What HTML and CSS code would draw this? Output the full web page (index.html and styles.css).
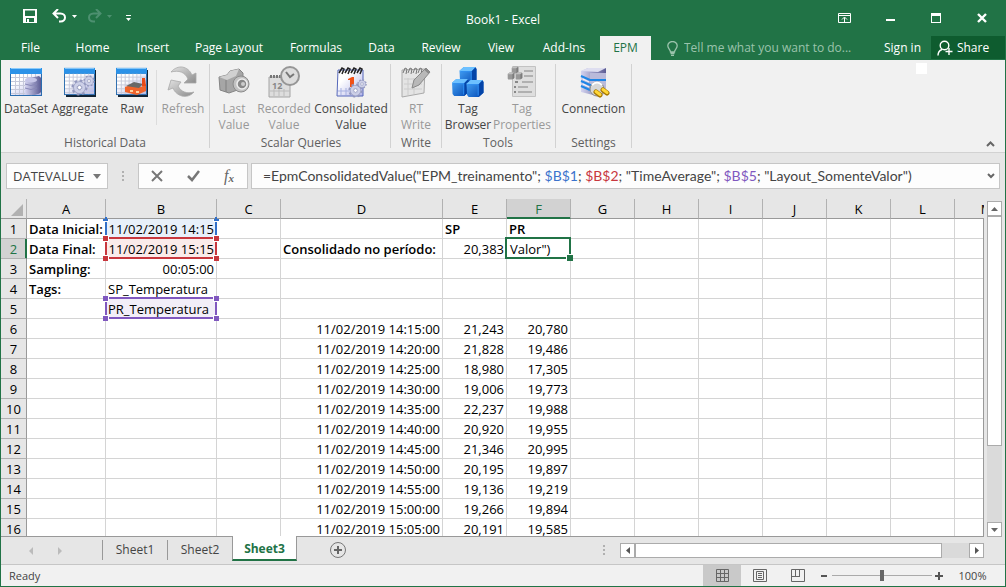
FILE: index.html
```
<!DOCTYPE html>
<html lang="en">
<head>
<meta charset="utf-8">
<title>Book1 - Excel</title>
<link rel="stylesheet" href="styles.css">
</head>
<body>
<svg class="defs" aria-hidden="true">
  <defs>
    <linearGradient id="steel" x1="0" x2="1"><stop offset="0" stop-color="#d4d4f0"/><stop offset="1" stop-color="#5c5c94"/></linearGradient>
    <linearGradient id="sheen" x1="0" y1="0" x2="1" y2="1"><stop offset="0.3" stop-color="#fff"/><stop offset="1" stop-color="#b0b2e8"/></linearGradient>
    <linearGradient id="gray" x1="0" y1="0" x2="1" y2="1"><stop offset="0" stop-color="#e2e2e2"/><stop offset="1" stop-color="#8c8c8c"/></linearGradient>
    <linearGradient id="blue" x1="0" y1="0" x2="1" y2="1"><stop offset="0" stop-color="#4aa8f8"/><stop offset="1" stop-color="#0248b4"/></linearGradient>
    <symbol id="grid-window" viewBox="0 0 32 32">
      <rect x="0" y="2" width="32" height="28" fill="#2a6cae"/>
      <rect x="1" y="8" width="30" height="21" fill="url(#sheen)"/>
      <rect x="0" y="2" width="32" height="6" fill="#2c92e8"/><rect x="1" y="2" width="30" height="1" fill="#8ccbfa"/>
      <path d="M5.500 8v21M9.500 8v21M13.500 8v21M17.500 8v21M21.500 8v21M25.500 8v21M1 11.500h30M1 15.500h30M1 19.500h30M1 23.500h30M1 27.500h30" stroke="#c6c9da" fill="none"/>
    </symbol>
    <symbol id="gear" viewBox="0 0 20 20">
      <circle cx="10" cy="10" r="8" fill="none" stroke="#9398be" stroke-width="3" stroke-dasharray="3.140 3.140"/>
      <circle cx="10" cy="10" r="5.500" fill="#e4e6f6" stroke="#9da2c6" stroke-width="4"/>
      <circle cx="10" cy="10" r="5" fill="none" stroke="#cdd0e8" stroke-width="3"/>
      <circle cx="10" cy="10" r="2.500" fill="#fff" stroke="#8087b0"/>
    </symbol>
    <symbol id="cube" viewBox="0 0 16 17">
      <path d="M0 4.500 4 1h11l1 2v10l-4.500 4H2l-1.500-2z" fill="url(#blue)"/>
      <path d="M0 4.500 4 1h11l-3.500 4H0z" fill="#6cc0ff"/><path d="M11.500 5 15 1.500l1 1V13l-4.500 4z" fill="#0444a8"/>
      <path d="M1 5.500h10v10" fill="none" stroke="#2c8cf0"/>
    </symbol>
    <symbol id="cube-gray" viewBox="0 0 16 17">
      <path d="M1 4 5 1h9l1 2v10l-5 3H2l-1-2z" fill="#989898"/>
      <path d="M1 4 5 1h9l-3 4H1z" fill="#c0c0c0"/><path d="M11 5l4-3v11l-4 3z" fill="#7c7c7c"/>
    </symbol>
  </defs>
</svg>
<div class="app">
  <header class="titlebar">
    <div class="quick">
      <button class="q-save" aria-label="Save"><svg width="14" height="14" viewBox="0 0 14 14"><path d="M0 0h14v14H0zM2 1.500v5.500h10V1.500zM3 9v4h1v-3h2v3h5V9z" fill="#fff" fill-rule="evenodd"/></svg></button>
      <button class="q-undo" aria-label="Undo"><svg width="15" height="14" viewBox="0 0 15 14"><path d="M1 4.500h7.500c6 0 6 8 0 8H7M6 0 1.500 4.500 6 9" fill="none" stroke="#fff" stroke-width="2"/></svg></button>
      <button class="q-arrow" aria-label="Undo list"><svg width="5" height="3"><path d="M0 0h5L2.500 3z" fill="#fff"/></svg></button>
      <button class="q-redo" aria-label="Redo" disabled><svg width="15" height="14" viewBox="0 0 15 14"><path d="M14 4.500H6.500c-6 0-6 8 0 8H8M9 0l4.500 4.500L9 9" fill="none" stroke="#4d9070" stroke-width="2"/></svg></button>
      <button class="q-arrow" aria-label="Redo list" disabled><svg width="5" height="3"><path d="M0 0h5L2.500 3z" fill="#4d9070"/></svg></button>
      <button class="q-more" aria-label="Customize Quick Access Toolbar"><svg width="5" height="6"><path d="M0 0h5v1H0zM0 3h5L2.500 6z" fill="#fff"/></svg></button>
    </div>
    <h1 class="title">Book1 - Excel</h1>
    <div class="window-buttons">
      <button aria-label="Ribbon Display Options"><svg width="13" height="10"><path d="M.5.5h12v9H.5zM1 2.500h11M6.500 9V4.500M4 6.500l2.500-2.500L9 6.500" fill="none" stroke="#fff"/></svg></button>
      <button aria-label="Minimize"><svg width="9" height="10"><path d="M0 6h9v2H0z" fill="#fff"/></svg></button>
      <button aria-label="Maximize"><svg width="10" height="10"><path d="M0 0h10v10H0zM1 3v6h8V3z" fill="#fff" fill-rule="evenodd"/></svg></button>
      <button aria-label="Close"><svg width="10" height="10"><path d="M1 1l8 8M9 1 1 9" stroke="#fff" stroke-width="2.400"/></svg></button>
    </div>
  </header>
  <nav class="tabs">
    <button class="tab t-file">File</button><button class="tab t-home">Home</button><button class="tab t-insert">Insert</button><button class="tab t-page">Page Layout</button><button class="tab t-formulas">Formulas</button><button class="tab t-data">Data</button><button class="tab t-review">Review</button><button class="tab t-view">View</button><button class="tab t-addins">Add-Ins</button><button class="tab t-epm active">EPM</button>
    <label class="tell"><svg width="11" height="15" viewBox="0 0 11 15"><path d="M3.500 11C3.500 8.500.8 7.500.8 4.800a4.700 4.300 0 0 1 9.400 0C10.200 7.500 7.500 8.500 7.500 11zM3.500 12.500h4M4 14.300h3" fill="none" stroke="#9bc3ac" stroke-width="1.300"/></svg><input type="text" aria-label="Tell me what you want to do" placeholder="Tell me what you want to do..."></label>
    <button class="signin">Sign in</button>
    <button class="share"><svg width="16" height="16" viewBox="0 0 16 16"><circle cx="7.500" cy="5.500" r="4.300"/><path d="M1 15.500c0-3.500 1.500-5 4-6M12 8v7M8.500 11.500h7" /></svg>Share</button>
  </nav>
  <section class="ribbon">
    <div class="group g-history">
      <div class="tools">
        <button class="tool w48"><svg width="32" height="32"><use href="#grid-window" width="32" height="32"/><path d="M15 15c0-4 12-4 14-5l2 2v14c-3 4-16 4-16 1z" fill="url(#steel)"/><ellipse cx="21" cy="14" rx="6" ry="2.500" fill="#c6c6e8"/><path d="M15 18q6 3 12 0M15 22q6 3 12 0" stroke="#8888b8" fill="none"/></svg><span>DataSet</span></button>
        <button class="tool w60"><svg width="32" height="32"><path d="M2 4h30v27H2z" fill="#123"/><use href="#grid-window" width="31" height="31"/><use href="#gear" x="7" y="13" width="17" height="17"/><use href="#gear" x="19" y="9" width="12" height="12"/></svg><span>Aggregate</span></button>
        <button class="tool w44"><svg width="32" height="32"><path d="M2 4h30v27H2z" fill="#123"/><use href="#grid-window" width="31" height="31"/><path d="M9 21l8-3 8 3 5-3v7l-9 4-12-3z" fill="#f0642c"/><path d="M10 20l8-4 9 2-4 4z" fill="#686868"/><path d="M26 12h3l1 8h-4z" fill="#e84a18"/><path d="M14 25h3M20 26h3" stroke="#ffd0a0" stroke-width="2"/></svg><span>Raw</span></button>
        <i class="divider"></i>
        <button class="tool w50" disabled><svg width="32" height="32"><g fill="url(#gray)" stroke="#aaa" stroke-width=".8"><path d="M4 6C11-2 21 0 25 9l4-2v10H17l4-4C18 6 12 4 4 6z"/><path d="M27 26C20 34 9 30 6 22l-5 2 3-10 10 2-3 4c3 6 9 8 16 6z"/></g></svg><span>Refresh</span></button>
      </div>
      <h2>Historical Data</h2>
    </div>
    <div class="group g-scalar">
      <div class="tools">
        <button class="tool w40" disabled><svg width="32" height="32"><path d="M1 11l8-2 3-4 9-2 4 4v15l-14 5-9-3z" fill="#a6a6a6" stroke="#858585"/><path d="M1 11l8-2 3-4 9-2-3 7-9 4z" fill="#d0d0d0"/><path d="M8 14v12" stroke="#808080"/><circle cx="23" cy="18" r="8" fill="#c2c2c2" stroke="#8b8b8b"/><circle cx="24" cy="18" r="5" fill="#888" stroke="#eee" stroke-width="1.500"/><circle cx="25" cy="18" r="2" fill="#ccc"/></svg><span>Last<br>Value</span></button>
        <button class="tool w60" disabled><svg width="32" height="32"><path d="M1 11h21v20H1z" fill="#ddd" stroke="#a4a4a4"/><path d="M2 25h20M6 23v7M11 23v7M16 23v7" stroke="#bbb"/><path d="M3 12v-3M6 12v-3M9 12v-3M12 12v-3" stroke="#777" stroke-width="2"/><text x="4" y="23" class="calendar-12">12</text><circle cx="22" cy="10" r="9" fill="#ddd" stroke="#969696" stroke-width="2"/><path d="M18 6l4 5 4-3" fill="none" stroke="#777" stroke-width="2"/></svg><span>Recorded<br>Value</span></button>
        <button class="tool w74"><svg width="32" height="32"><path d="M3 4h25v26H2z" fill="url(#sheen)" stroke="#5567ba"/><path d="M3 25h16M6 22v7M11 22v7M16 22v7" stroke="#a5afe0"/><path d="M4 7l3-5 2 1-2 5m3-1 3-5 2 1-2 5m3-1 3-5 2 1-2 5m3-1 3-5 2 1-2 5" fill="none" stroke="#222" stroke-width="1.500"/><path d="M13 13l4-2h2v10h-4v-7h-2z" fill="#f05018"/><use href="#gear" x="13" y="17" width="15" height="15"/><use href="#gear" x="22" y="13" width="10" height="10"/></svg><span>Consolidated<br>Value</span></button>
      </div>
      <h2>Scalar Queries</h2>
    </div>
    <div class="group">
      <div class="tools">
        <button class="tool w50" disabled><svg width="32" height="32"><path d="M2 4l23-1-1 24-22 4z" fill="#e4e4e4" stroke="#aaa"/><path d="M4 13h18M4 18h18M4 23h18M8 12v17M14 12v16" stroke="#ccc"/><path d="M3 7l2-5 2 1-1 5m2-1 2-5 2 1-1 5m2-1 2-5 2 1-1 5m2-1 2-5 2 1-1 5" fill="none" stroke="#777"/><path d="M12 22l2-8L26 2l4 4-11 13z" fill="#b8b8b8" stroke="#888"/><path d="M25 3l4 4" stroke="#888" stroke-width="2"/></svg><span>RT<br>Write</span></button>
      </div>
      <h2>Write</h2>
    </div>
    <div class="group g-tools">
      <div class="tools">
        <button class="tool w48"><svg width="32" height="32"><use href="#cube" x="7" y="0" width="18" height="18"/><use href="#cube" x="0" y="12" width="17" height="18"/><use href="#cube" x="14" y="13" width="18" height="18"/></svg><span>Tag<br>Browser</span></button>
        <button class="tool w60" disabled><svg width="32" height="32"><path d="M6.500.500h23v30h-23z" fill="#dedede" stroke="#c2c2c2"/><path d="M18 5h9M18 10h9M16 16h11M12 21h10M12 26h14" stroke="#b0b0b0" stroke-width="2"/><path d="M9 16h3M8 21h2M8 26h2" stroke="#888" stroke-width="2"/><use href="#cube-gray" x="5" y="0" width="8" height="8"/><use href="#cube-gray" x="1" y="6" width="8" height="8"/><use href="#cube-gray" x="9" y="6" width="8" height="8"/></svg><span>Tag<br>Properties</span></button>
      </div>
      <h2>Tools</h2>
    </div>
    <div class="group">
      <div class="tools">
        <button class="tool w75"><svg width="32" height="32"><path d="M3 5l7-3h18v22l-9 6L3 26z" fill="url(#steel)"/><path d="M3 5l7-3h18l-8 4z" fill="#dedef0"/><path d="M12 7h16v20l-7 4-9-4z" fill="#babada"/><path d="M3 10l9 4h16M3 15l9 4h9M3 20l9 4" fill="none" stroke="#1e86e6" stroke-width="2"/><path d="M5 13l6 3M5 18l6 3" stroke="#fff"/><circle cx="19" cy="23" r="7" fill="#d7d7d7" stroke="#888"/><path d="M14 19q5-5 10 0" fill="none" stroke="#fff" stroke-width="2"/><path d="M18 26l4 3M25 24l4 3" stroke="#a87800" stroke-width="5" stroke-linecap="round"/><path d="M18 25.500l4 3M25 23.500l4 3" stroke="#ffd736" stroke-width="3" stroke-linecap="round"/></svg><span>Connection</span></button>
      </div>
      <h2>Settings</h2>
    </div>
    <i class="patch"></i>
    <button class="collapse" aria-label="Collapse the Ribbon"><svg width="9" height="6"><path d="M1 5l3.500-3.500L8 5" fill="none" stroke="#666" stroke-width="2"/></svg></button>
  </section>
  <section class="formula-bar">
    <div class="name-box"><input type="text" aria-label="Name box" value="DATEVALUE"><button aria-label="Names"><svg width="8" height="5"><path d="M0 0h8L4 5z" fill="#777"/></svg></button></div>
    <svg class="dots" width="2" height="11"><path d="M0 0h2v2H0zM0 4h2v2H0zM0 8h2v2H0z" fill="#b0b0b0"/></svg>
    <div class="entry-buttons">
      <button aria-label="Cancel"><svg width="12" height="12"><path d="M1 1l10 10M11 1 1 11" stroke="#777" stroke-width="2"/></svg></button>
      <button aria-label="Enter"><svg width="13" height="12"><path d="M1 6l4 4 7-9" fill="none" stroke="#777" stroke-width="2.500"/></svg></button>
      <button class="fx" aria-label="Insert Function"><i>f</i><small>x</small></button>
    </div>
    <div class="formula"><div class="formula-text" contenteditable="true" role="textbox" aria-label="Formula" spellcheck="false">=EpmConsolidatedValue("EPM_treinamento"; <span class="c-blue">$B$1</span>; <span class="c-red">$B$2</span>; "TimeAverage"; <span class="c-purple">$B$5</span>; "Layout_SomenteValor")</div><button aria-label="Expand Formula Bar"><svg width="8" height="6"><path d="M1 1l3 3 3-3" fill="none" stroke="#666" stroke-width="2"/></svg></button></div>
  </section>
  <main class="sheet">
    <div class="grid">
      <table>
        <colgroup><col class="c-head"><col class="c-a"><col class="c-b"><col class="c-std"><col class="c-d"><col class="c-std"><col class="c-std"><col class="c-std"><col class="c-std"><col class="c-std"><col class="c-std"><col class="c-std"><col class="c-std"><col class="c-std"></colgroup>
        <thead><tr><th class="corner"><svg width="12" height="12"><path d="M12 0v12H0z" fill="#b1b1b1"/></svg></th><th>A</th><th>B</th><th>C</th><th>D</th><th>E</th><th class="col-on">F</th><th>G</th><th>H</th><th>I</th><th>J</th><th>K</th><th>L</th><th>M</th></tr></thead>
        <tbody>
          <tr><th>1</th><td class="b">Data Inicial:</td><td class="r range blue">11/02/2019 14:15</td><td></td><td></td><td class="b">SP</td><td class="b">PR</td><td></td><td></td><td></td><td></td><td></td><td></td><td></td></tr>
          <tr><th class="row-on">2</th><td class="b">Data Final:</td><td class="r range red">11/02/2019 15:15</td><td></td><td class="b">Consolidado no período:</td><td class="r">20,383</td><td class="active-cell">Valor")</td><td></td><td></td><td></td><td></td><td></td><td></td><td></td></tr>
          <tr><th>3</th><td class="b">Sampling:</td><td class="r">00:05:00</td><td></td><td></td><td></td><td></td><td></td><td></td><td></td><td></td><td></td><td></td><td></td></tr>
          <tr><th>4</th><td class="b">Tags:</td><td>SP_Temperatura</td><td></td><td></td><td></td><td></td><td></td><td></td><td></td><td></td><td></td><td></td><td></td></tr>
          <tr><th>5</th><td></td><td class="range purple">PR_Temperatura</td><td></td><td></td><td></td><td></td><td></td><td></td><td></td><td></td><td></td><td></td><td></td></tr>
          <tr><th>6</th><td></td><td></td><td></td><td class="r">11/02/2019 14:15:00</td><td class="r">21,243</td><td class="r">20,780</td><td></td><td></td><td></td><td></td><td></td><td></td><td></td></tr>
          <tr><th>7</th><td></td><td></td><td></td><td class="r">11/02/2019 14:20:00</td><td class="r">21,828</td><td class="r">19,486</td><td></td><td></td><td></td><td></td><td></td><td></td><td></td></tr>
          <tr><th>8</th><td></td><td></td><td></td><td class="r">11/02/2019 14:25:00</td><td class="r">18,980</td><td class="r">17,305</td><td></td><td></td><td></td><td></td><td></td><td></td><td></td></tr>
          <tr><th>9</th><td></td><td></td><td></td><td class="r">11/02/2019 14:30:00</td><td class="r">19,006</td><td class="r">19,773</td><td></td><td></td><td></td><td></td><td></td><td></td><td></td></tr>
          <tr><th>10</th><td></td><td></td><td></td><td class="r">11/02/2019 14:35:00</td><td class="r">22,237</td><td class="r">19,988</td><td></td><td></td><td></td><td></td><td></td><td></td><td></td></tr>
          <tr><th>11</th><td></td><td></td><td></td><td class="r">11/02/2019 14:40:00</td><td class="r">20,920</td><td class="r">19,955</td><td></td><td></td><td></td><td></td><td></td><td></td><td></td></tr>
          <tr><th>12</th><td></td><td></td><td></td><td class="r">11/02/2019 14:45:00</td><td class="r">21,346</td><td class="r">20,995</td><td></td><td></td><td></td><td></td><td></td><td></td><td></td></tr>
          <tr><th>13</th><td></td><td></td><td></td><td class="r">11/02/2019 14:50:00</td><td class="r">20,195</td><td class="r">19,897</td><td></td><td></td><td></td><td></td><td></td><td></td><td></td></tr>
          <tr><th>14</th><td></td><td></td><td></td><td class="r">11/02/2019 14:55:00</td><td class="r">19,136</td><td class="r">19,219</td><td></td><td></td><td></td><td></td><td></td><td></td><td></td></tr>
          <tr><th>15</th><td></td><td></td><td></td><td class="r">11/02/2019 15:00:00</td><td class="r">19,266</td><td class="r">19,894</td><td></td><td></td><td></td><td></td><td></td><td></td><td></td></tr>
          <tr><th>16</th><td></td><td></td><td></td><td class="r">11/02/2019 15:05:00</td><td class="r">20,191</td><td class="r">19,585</td><td></td><td></td><td></td><td></td><td></td><td></td><td></td></tr>
        </tbody>
      </table>
    </div>
    <div class="vscroll">
      <button aria-label="Scroll up"><svg width="7" height="4"><path d="M0 4h7L3.500 0z" fill="#666"/></svg></button>
      <div class="vtrack"><div class="vthumb"></div></div>
      <button aria-label="Scroll down"><svg width="7" height="4"><path d="M0 0h7L3.500 4z" fill="#666"/></svg></button>
    </div>
  </main>
  <footer class="sheet-bar">
    <div class="sheet-nav">
      <button aria-label="Previous sheets"><svg width="4" height="8"><path d="M4 0v8L0 4z" fill="#bbb"/></svg></button>
      <button aria-label="Next sheets"><svg width="4" height="8"><path d="M0 0v8l4-4z" fill="#bbb"/></svg></button>
    </div>
    <button class="sheet-tab">Sheet1</button><button class="sheet-tab">Sheet2</button><button class="sheet-tab current">Sheet3</button>
    <button class="new-sheet" aria-label="New sheet"><svg width="16" height="16"><circle cx="8" cy="8" r="7.500" fill="none" stroke="#777"/><path d="M4 8h8M8 4v8" stroke="#666" stroke-width="2"/></svg></button>
    <svg class="dots" width="2" height="11"><path d="M0 0h2v2H0zM0 4h2v2H0zM0 8h2v2H0z" fill="#b0b0b0"/></svg>
    <div class="hscroll">
      <button aria-label="Scroll left"><svg width="4" height="7"><path d="M4 0v7L0 3.500z" fill="#555"/></svg></button>
      <div class="htrack"><div class="hthumb"></div></div>
      <button aria-label="Scroll right"><svg width="4" height="7"><path d="M0 0v7l4-3.500z" fill="#555"/></svg></button>
    </div>
  </footer>
  <footer class="status">
    <span class="ready">Ready</span>
    <button class="view on" aria-label="Normal"><svg width="13" height="13"><path d="M.5.5h12v12H.5zM4.500 0v13M8.500 0v13M0 4.500h13M0 8.500h13" fill="none" stroke="#666"/></svg></button>
    <button class="view" aria-label="Page Layout view"><svg width="14" height="13"><path d="M.5.5h13v12H.5zM3.500 2.500h7v8h-7zM5 4.500h4M5 6.500h4M5 8.500h4" fill="none" stroke="#666"/></svg></button>
    <button class="view" aria-label="Page Break Preview"><svg width="14" height="13"><path d="M.5.5h13v12H.5zM4.500 0v7M8.500 0v7.500M1 7.500h8" fill="none" stroke="#666"/></svg></button>
    <button class="zoom-step" aria-label="Zoom out"><svg width="7" height="8"><path d="M0 3h6v2H0z" fill="#555"/></svg></button>
    <input class="zoom" type="range" min="0" max="100" value="50" aria-label="Zoom">
    <button class="zoom-step" aria-label="Zoom in"><svg width="8" height="8"><path d="M0 3h8v2H0zM3 0h2v8H3z" fill="#555"/></svg></button>
    <button class="zoom-value">100%</button>
  </footer>
</div>
</body>
</html>
```

FILE: styles.css
```
* { box-sizing: border-box; }
body { margin: 0; font: 12px/16px "Open Sans", "Noto Sans", sans-serif; color: #444; }
button, input { font: inherit; color: inherit; background: none; border: 0; padding: 0; margin: 0; border-radius: 0; }
input { outline: 0; min-width: 0; }
button { display: flex; align-items: center; justify-content: center; white-space: nowrap; }
h1, h2 { margin: 0; font: inherit; }
svg { display: block; flex: none; }
.defs { position: absolute; width: 0; height: 0; }
.app { height: 100vh; display: flex; flex-direction: column; border: 1px solid #217346; border-top: 0; background: #e6e6e6; overflow: hidden; }

.titlebar { flex: none; height: 36px; display: grid; grid-template-columns: 1fr auto 1fr; background: #217346; color: #fff; }
.quick { display: flex; align-items: center; height: 32px; padding-left: 22px; }
.q-undo { margin-left: 15px; }
.q-arrow { margin-left: 5px; }
.q-redo { margin-left: 10px; }
.q-more { margin-left: 14px; padding-top: 4px; }
.title { padding-top: 12px; }
.window-buttons { display: flex; justify-content: flex-end; height: 36px; }
.window-buttons button { width: 46px; }

.tabs { flex: none; display: flex; height: 24px; background: #217346; color: #fff; }
.tab { flex: none; height: 24px; }
.t-file { width: 59px; }
.t-home { width: 65px; }
.t-insert { width: 56px; }
.t-page { width: 96px; }
.t-formulas { width: 78px; }
.t-data { width: 53px; }
.t-review { width: 66px; }
.t-view { width: 54px; }
.t-addins { width: 72px; }
.t-epm { width: 51px; }
.tab.active { background: #f1f1f1; color: #217346; }
.tell { flex: 1; display: flex; align-items: center; gap: 6px; padding-left: 16px; }
.tell input { flex: 1; }
.tell input::placeholder { color: #9bc3ac; opacity: 1; }
.signin { padding: 0 10px; }
.share { width: 74px; height: 23px; gap: 4px; padding-right: 10px; background: #0e5c2f; }
.share svg { fill: none; stroke: #fff; stroke-width: 1.400; }

.ribbon { flex: none; position: relative; display: flex; height: 93px; background: #f1f1f1; border-bottom: 1px solid #d2d2d2; }
.group { display: flex; flex-direction: column; justify-content: space-between; margin: 4px 0; padding-top: 2px; border-right: 1px solid #d2d2d2; }
.g-history { padding: 2px 1px 0; }
.g-scalar { padding: 2px 2px 0 4px; }
.g-tools { padding: 2px 3px 0 2px; }
.group h2 { text-align: center; color: #606060; line-height: 10px; }
.tools { display: flex; }
.tool { flex-direction: column; justify-content: flex-start; gap: 3px; line-height: 16px; }
.tool:disabled { color: #999; }
.w40 { width: 40px; }
.w44 { width: 44px; }
.w48 { width: 48px; }
.w50 { width: 50px; }
.w60 { width: 60px; }
.w74 { width: 74px; }
.w75 { width: 75px; }
.divider { width: 1px; height: 55px; margin: 4px 1px 0 2px; background: #dcdcdc; }
.calendar-12 { font: bold 9px "Open Sans", sans-serif; fill: #888; }
.patch { position: absolute; top: 3px; right: 78px; width: 11px; height: 11px; background: #fff; }
.collapse { position: absolute; right: 9px; bottom: 3px; width: 12px; height: 10px; }

.formula-bar { flex: none; display: flex; align-items: center; height: 46px; padding: 0 5px; }
.name-box, .entry-buttons, .formula { display: flex; height: 26px; background: #fdfdfd; border: 1px solid #c6c6c6; }
.name-box { width: 102px; font-size: 13px; }
.name-box input { flex: 1; padding-left: 6px; }
.name-box button { width: 20px; }
.formula-bar .dots { margin: 0 14px; }
.entry-buttons { width: 110px; }
.entry-buttons button { flex: 1; }
.fx { font: 16px/20px "Liberation Serif", serif; color: #666; }
.fx small { font: italic bold 11px/20px "Liberation Serif", serif; padding-top: 3px; }
.formula { flex: 1; min-width: 0; margin-left: 3px; }
.formula-text { flex: 1; min-width: 0; padding-left: 11px; overflow: hidden; white-space: nowrap; font: 14px/24px Lato, sans-serif; outline: 0; }
.formula button { width: 16px; }
.c-blue { color: #3b73cc; }
.c-red { color: #c8373e; }
.c-purple { color: #8058bf; }

.sheet { flex: 1; min-height: 0; display: flex; }
.grid { flex: 1; min-width: 0; overflow: hidden; border-bottom: 1px solid #999; position: relative; }
.grid::after { content: ""; position: absolute; top: 20px; right: 0; bottom: 0; width: 1px; background: #999; }
table { width: 1017px; table-layout: fixed; border-collapse: separate; border-spacing: 0; font: 13px/18px "Open Sans", "Noto Sans", sans-serif; color: #000; }
.c-head { width: 26px; }
.c-a { width: 79px; }
.c-b { width: 111px; }
.c-std { width: 64px; }
.c-d { width: 162px; }
th, td { height: 20px; padding: 1px 2px 0; border-right: 1px solid #d4d4d4; border-bottom: 1px solid #d4d4d4; white-space: nowrap; text-align: left; }
td { background: #fff; }
th { background: #e6e6e6; font-weight: normal; text-align: center; border-right-color: #b1b1b1; border-bottom-color: #b1b1b1; }
thead th { border-bottom-color: #999; }
tbody th { border-right-color: #999; }
.corner { padding: 3px 2px 0 10px; }
.col-on { background: #d2d2d2; color: #217346; box-shadow: inset 0 -1px #217346; border-bottom-color: #217346; }
.row-on { background: #d2d2d2; color: #217346; box-shadow: inset -1px 0 #217346; border-right-color: #217346; }
.b { font-weight: 600; }
.r { text-align: right; }
.range { position: relative; }
.range::before { content: ""; position: absolute; z-index: 1; inset: -2px -1px -1px; border: 2px solid var(--line); }
.range::after {
  content: ""; position: absolute; z-index: 2; inset: -3px; pointer-events: none;
  --dot: linear-gradient(var(--line), var(--line));
  --gap: linear-gradient(#fff, #fff);
  background:
    var(--dot) 0 0 / 5px 5px, var(--dot) 100% 0 / 5px 5px, var(--dot) 0 100% / 5px 5px, var(--dot) 100% 100% / 5px 5px,
    var(--gap) 0 0 / 6px 6px, var(--gap) 100% 0 / 6px 6px, var(--gap) 0 100% / 6px 6px, var(--gap) 100% 100% / 6px 6px;
  background-repeat: no-repeat;
}
.blue { --line: #3270c8; background: #e8f0fa; }
.red { --line: #c8373e; background: #faebea; }
.purple { --line: #8058bf; background: #f2eef8; }
.blue::before { border-top: 0; }
.blue::after { clip-path: inset(3px 0 0 0); }
.red::before, .red::after { z-index: 3; }
.active-cell { position: relative; padding-left: 3px; }
.active-cell::before { content: ""; position: absolute; inset: -2px -1px -1px -2px; border: 2px solid #217346; }
.active-cell::after { content: ""; position: absolute; right: -3px; bottom: -3px; width: 6px; height: 6px; background: #217346; border: solid #fff; border-width: 1px 0 0 1px; }

.vscroll { flex: none; width: 21px; padding: 2px 3px 0; display: flex; flex-direction: column; }
.vscroll button, .hscroll button { flex: none; width: 15px; height: 15px; background: #fff; border: 1px solid #ababab; }
.vtrack { flex: 1; background: #dadada; }
.vthumb { width: 15px; height: 75%; background: #fff; border: 1px solid #ababab; }

.sheet-bar { flex: none; display: flex; height: 27px; padding-right: 21px; }
.sheet-nav { width: 101px; display: flex; align-items: center; padding-left: 20px; height: 27px; }
.sheet-nav button { width: 20px; margin-right: 9px; }
.sheet-tab { width: 65px; height: 20px; margin-top: 3px; padding-bottom: 1px; border-left: 1px solid #999; }
.sheet-tab.current { position: relative; height: 25px; margin: -1px 0 0; padding-top: 3px; background: #fff; color: #217346; font-weight: bold; border-right: 1px solid #999; border-bottom: 2px solid #217346; }
.new-sheet { width: 16px; height: 26px; margin-left: 33px; }
.sheet-bar > .dots { margin: 8px 15px 0 auto; }
.hscroll { display: flex; width: 364px; height: 15px; margin-top: 6px; }
.htrack { flex: 1; background: #dadada; }
.hthumb { height: 15px; width: 92%; background: #fff; border: 1px solid #ababab; }

.status { flex: none; display: flex; align-items: center; height: 22px; padding-right: 18px; background: #f1f1f1; border-top: 1px solid #c6c6c6; font-size: 11px; }
.ready { flex: 1; padding-left: 8px; }
.view { width: 38px; height: 21px; }
.view.on { background: #c9c9c9; }
.zoom-step { width: 8px; height: 20px; margin: 0 4px 0 3px; }
.zoom { appearance: none; width: 100px; height: 12px; background: linear-gradient(#aaa, #aaa) 0 50% / 100% 1px no-repeat; }
.zoom::-webkit-slider-thumb { appearance: none; width: 4px; height: 11px; background: #666; }
.zoom-value { width: 29px; margin-left: 11px; }
```
